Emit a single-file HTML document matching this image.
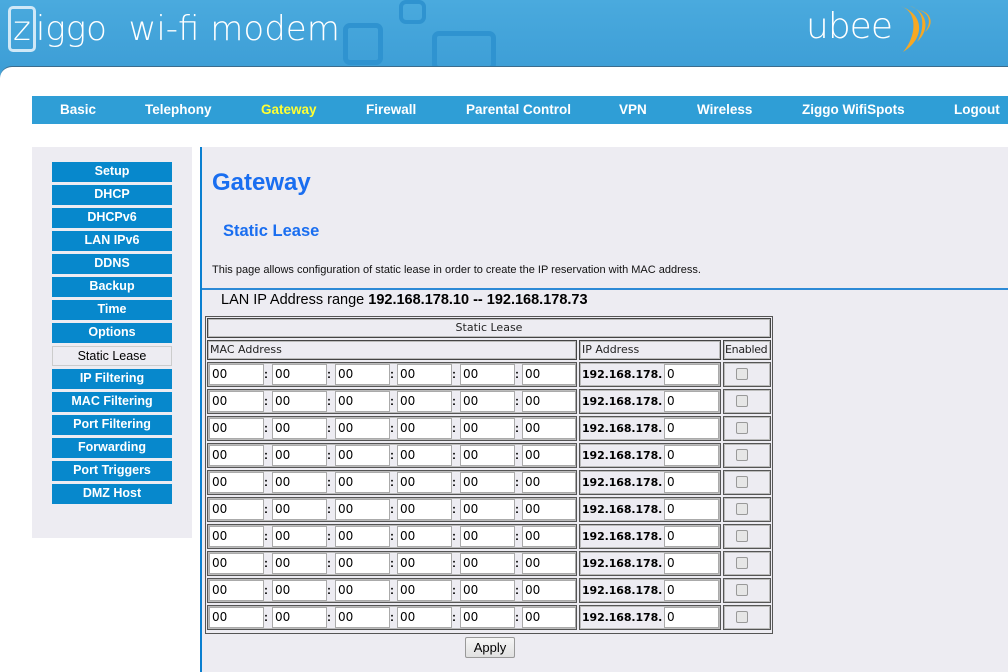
<!DOCTYPE html>
<html><head><meta charset="utf-8"><style>
*{box-sizing:border-box;margin:0;padding:0}
body{width:1008px;height:672px;overflow:hidden;position:relative;font-family:"Liberation Sans",Arial,sans-serif;background:#43a3d9}
.hdr{position:absolute;left:0;top:0;width:1008px;height:70px;background:linear-gradient(#4aaade,#3d9ed6)}
.logo{position:absolute;left:8px;top:9px;color:#fff;font-size:34px;font-family:"DejaVu Sans",sans-serif;font-weight:200}
.sq{position:absolute;border:5px solid #2f93d0;border-radius:7px}
.panel{position:absolute;left:0;top:66px;width:1008px;height:606px;background:#fff;border-top-left-radius:12px;border-top:1px solid #3b6c8d}
.nav{position:absolute;left:32px;top:96px;width:976px;height:28px;background:#2f9ed6}
.nav span{position:absolute;top:6px;color:#fff;font-weight:bold;font-size:13.5px}
.side{position:absolute;left:32px;top:147px;width:160px;height:391px;background:#edecf2}
.btn{position:absolute;left:52px;width:120px;height:20px;background:#0788cc;color:#fff;font-weight:bold;font-size:12.5px;text-align:center;line-height:18px}
.btn.sel{background:#edecf2;color:#000;font-weight:normal;border:1px solid #ccc}
.content{position:absolute;left:200px;top:147px;width:808px;height:525px;background:#edecf2;border-left:2px solid #0a7fd0}
.hl{position:absolute;left:202px;top:288px;width:806px;height:2px;background:#2d8ad6}
.cell{position:absolute;border:1px solid #444;box-shadow:inset 0 0 0 1px #bbb}
.tx{font-family:"DejaVu Sans",sans-serif;font-size:11px;color:#222}
.row{position:absolute;left:207px;height:25px;width:566px}
.row .m{position:absolute;left:0;top:0;width:370px;height:25px;border:1px solid #555;box-shadow:inset 0 0 0 1px #bbb}
.row .i{position:absolute;left:372px;top:0;width:142px;height:25px;border:1px solid #555;box-shadow:inset 0 0 0 1px #bbb}
.row .e{position:absolute;left:516px;top:0;width:48px;height:25px;border:1px solid #555;box-shadow:inset 0 0 0 1px #bbb}
.in{position:absolute;top:2px;height:21px;background:#fff;border:1px solid #aaa;font-family:"DejaVu Sans",sans-serif;font-size:12px;padding-left:2px;line-height:19px;color:#000}
.c{position:absolute;top:5px;font-weight:bold;font-size:12px}
.ip{position:absolute;left:375px;top:6px;font-family:"DejaVu Sans",sans-serif;font-weight:bold;font-size:11px;letter-spacing:-0.1px}
.cb{position:absolute;left:529px;top:6px;width:12px;height:12px;border:1px solid #999;border-radius:2px;background:#e6e6e6}
</style></head><body>
<div class="hdr">
 <div class="logo"><span style="border:3px solid #cfe8f7;border-radius:5px;padding:0 2px">z</span>iggo&nbsp;&nbsp;wi-fi modem</div>
 <div class="sq" style="left:343px;top:23px;width:40px;height:42px"></div>
 <div class="sq" style="left:399px;top:0;width:27px;height:24px;border-width:4px"></div>
 <div class="sq" style="left:432px;top:31px;width:64px;height:40px"></div>
 <div style="position:absolute;left:806px;top:6px;color:#fff;font-size:36px;font-family:'DejaVu Sans',sans-serif;font-weight:200;letter-spacing:-1px">ubee</div>
 <svg style="position:absolute;left:895px;top:4px" width="40" height="48" viewBox="0 0 40 48"><path d="M5 2 C25 8 20 35 8 48 C30 35 30 10 5 2Z M15 2 C30 6 30 25 22 38 C36 25 32 8 15 2Z M24 6 C36 10 36 20 30 28 C40 20 36 8 24 6Z" fill="#f7a823"/></svg>
</div>
<div class="panel"></div>
<div class="nav">
<span style="left:28px">Basic</span><span style="left:113px">Telephony</span><span style="left:229px;color:#ffff33">Gateway</span><span style="left:334px">Firewall</span><span style="left:434px">Parental Control</span><span style="left:587px">VPN</span><span style="left:665px">Wireless</span><span style="left:770px">Ziggo WifiSpots</span><span style="left:922px">Logout</span>
</div>
<div class="side"></div>
<div class="btn" style="top:162px">Setup</div>
<div class="btn" style="top:185px">DHCP</div>
<div class="btn" style="top:208px">DHCPv6</div>
<div class="btn" style="top:231px">LAN IPv6</div>
<div class="btn" style="top:254px">DDNS</div>
<div class="btn" style="top:277px">Backup</div>
<div class="btn" style="top:300px">Time</div>
<div class="btn" style="top:323px">Options</div>
<div class="btn sel" style="top:346px">Static Lease</div>
<div class="btn" style="top:369px">IP Filtering</div>
<div class="btn" style="top:392px">MAC Filtering</div>
<div class="btn" style="top:415px">Port Filtering</div>
<div class="btn" style="top:438px">Forwarding</div>
<div class="btn" style="top:461px">Port Triggers</div>
<div class="btn" style="top:484px">DMZ Host</div>
<div class="content"></div>
<div style="position:absolute;left:212px;top:169px;font-size:24px;font-weight:bold;color:#1a6ef0">Gateway</div>
<div style="position:absolute;left:223px;top:222px;font-size:16.5px;font-weight:bold;color:#1a6ef0">Static Lease</div>
<div style="position:absolute;left:212px;top:264px;font-size:11px;color:#111">This page allows configuration of static lease in order to create the IP reservation with MAC address.</div>
<div class="hl"></div>
<div style="position:absolute;left:221px;top:292px;font-size:14.5px;color:#000">LAN IP Address range <b>192.168.178.10 -- 192.168.178.73</b></div>
<div style="position:absolute;left:205px;top:316px;width:568px;height:318px;border:1px solid #555"></div>
<div class="cell tx" style="left:207px;top:318px;width:564px;height:20px;text-align:center;line-height:18px">Static Lease</div>
<div class="cell tx" style="left:207px;top:340px;width:370px;height:20px;line-height:18px;padding-left:2px">MAC Address</div>
<div class="cell tx" style="left:579px;top:340px;width:142px;height:20px;line-height:18px;padding-left:2px">IP Address</div>
<div class="cell tx" style="left:723px;top:340px;width:48px;height:20px;line-height:18px;padding-left:1px;letter-spacing:-0.3px">Enabled</div>

<div class="row" style="top:362px"><div class="m"></div><div class="in" style="left:2px;width:55px">00</div><span class="c" style="left:57px">:</span><div class="in" style="left:65px;width:55px">00</div><span class="c" style="left:120px">:</span><div class="in" style="left:128px;width:55px">00</div><span class="c" style="left:183px">:</span><div class="in" style="left:190px;width:55px">00</div><span class="c" style="left:245px">:</span><div class="in" style="left:253px;width:55px">00</div><span class="c" style="left:308px">:</span><div class="in" style="left:315px;width:54px">00</div><div class="i"></div><span class="ip">192.168.178.</span><div class="in" style="left:457px;width:55px">0</div><div class="e"></div><div class="cb"></div></div>
<div class="row" style="top:389px"><div class="m"></div><div class="in" style="left:2px;width:55px">00</div><span class="c" style="left:57px">:</span><div class="in" style="left:65px;width:55px">00</div><span class="c" style="left:120px">:</span><div class="in" style="left:128px;width:55px">00</div><span class="c" style="left:183px">:</span><div class="in" style="left:190px;width:55px">00</div><span class="c" style="left:245px">:</span><div class="in" style="left:253px;width:55px">00</div><span class="c" style="left:308px">:</span><div class="in" style="left:315px;width:54px">00</div><div class="i"></div><span class="ip">192.168.178.</span><div class="in" style="left:457px;width:55px">0</div><div class="e"></div><div class="cb"></div></div>
<div class="row" style="top:416px"><div class="m"></div><div class="in" style="left:2px;width:55px">00</div><span class="c" style="left:57px">:</span><div class="in" style="left:65px;width:55px">00</div><span class="c" style="left:120px">:</span><div class="in" style="left:128px;width:55px">00</div><span class="c" style="left:183px">:</span><div class="in" style="left:190px;width:55px">00</div><span class="c" style="left:245px">:</span><div class="in" style="left:253px;width:55px">00</div><span class="c" style="left:308px">:</span><div class="in" style="left:315px;width:54px">00</div><div class="i"></div><span class="ip">192.168.178.</span><div class="in" style="left:457px;width:55px">0</div><div class="e"></div><div class="cb"></div></div>
<div class="row" style="top:443px"><div class="m"></div><div class="in" style="left:2px;width:55px">00</div><span class="c" style="left:57px">:</span><div class="in" style="left:65px;width:55px">00</div><span class="c" style="left:120px">:</span><div class="in" style="left:128px;width:55px">00</div><span class="c" style="left:183px">:</span><div class="in" style="left:190px;width:55px">00</div><span class="c" style="left:245px">:</span><div class="in" style="left:253px;width:55px">00</div><span class="c" style="left:308px">:</span><div class="in" style="left:315px;width:54px">00</div><div class="i"></div><span class="ip">192.168.178.</span><div class="in" style="left:457px;width:55px">0</div><div class="e"></div><div class="cb"></div></div>
<div class="row" style="top:470px"><div class="m"></div><div class="in" style="left:2px;width:55px">00</div><span class="c" style="left:57px">:</span><div class="in" style="left:65px;width:55px">00</div><span class="c" style="left:120px">:</span><div class="in" style="left:128px;width:55px">00</div><span class="c" style="left:183px">:</span><div class="in" style="left:190px;width:55px">00</div><span class="c" style="left:245px">:</span><div class="in" style="left:253px;width:55px">00</div><span class="c" style="left:308px">:</span><div class="in" style="left:315px;width:54px">00</div><div class="i"></div><span class="ip">192.168.178.</span><div class="in" style="left:457px;width:55px">0</div><div class="e"></div><div class="cb"></div></div>
<div class="row" style="top:497px"><div class="m"></div><div class="in" style="left:2px;width:55px">00</div><span class="c" style="left:57px">:</span><div class="in" style="left:65px;width:55px">00</div><span class="c" style="left:120px">:</span><div class="in" style="left:128px;width:55px">00</div><span class="c" style="left:183px">:</span><div class="in" style="left:190px;width:55px">00</div><span class="c" style="left:245px">:</span><div class="in" style="left:253px;width:55px">00</div><span class="c" style="left:308px">:</span><div class="in" style="left:315px;width:54px">00</div><div class="i"></div><span class="ip">192.168.178.</span><div class="in" style="left:457px;width:55px">0</div><div class="e"></div><div class="cb"></div></div>
<div class="row" style="top:524px"><div class="m"></div><div class="in" style="left:2px;width:55px">00</div><span class="c" style="left:57px">:</span><div class="in" style="left:65px;width:55px">00</div><span class="c" style="left:120px">:</span><div class="in" style="left:128px;width:55px">00</div><span class="c" style="left:183px">:</span><div class="in" style="left:190px;width:55px">00</div><span class="c" style="left:245px">:</span><div class="in" style="left:253px;width:55px">00</div><span class="c" style="left:308px">:</span><div class="in" style="left:315px;width:54px">00</div><div class="i"></div><span class="ip">192.168.178.</span><div class="in" style="left:457px;width:55px">0</div><div class="e"></div><div class="cb"></div></div>
<div class="row" style="top:551px"><div class="m"></div><div class="in" style="left:2px;width:55px">00</div><span class="c" style="left:57px">:</span><div class="in" style="left:65px;width:55px">00</div><span class="c" style="left:120px">:</span><div class="in" style="left:128px;width:55px">00</div><span class="c" style="left:183px">:</span><div class="in" style="left:190px;width:55px">00</div><span class="c" style="left:245px">:</span><div class="in" style="left:253px;width:55px">00</div><span class="c" style="left:308px">:</span><div class="in" style="left:315px;width:54px">00</div><div class="i"></div><span class="ip">192.168.178.</span><div class="in" style="left:457px;width:55px">0</div><div class="e"></div><div class="cb"></div></div>
<div class="row" style="top:578px"><div class="m"></div><div class="in" style="left:2px;width:55px">00</div><span class="c" style="left:57px">:</span><div class="in" style="left:65px;width:55px">00</div><span class="c" style="left:120px">:</span><div class="in" style="left:128px;width:55px">00</div><span class="c" style="left:183px">:</span><div class="in" style="left:190px;width:55px">00</div><span class="c" style="left:245px">:</span><div class="in" style="left:253px;width:55px">00</div><span class="c" style="left:308px">:</span><div class="in" style="left:315px;width:54px">00</div><div class="i"></div><span class="ip">192.168.178.</span><div class="in" style="left:457px;width:55px">0</div><div class="e"></div><div class="cb"></div></div>
<div class="row" style="top:605px"><div class="m"></div><div class="in" style="left:2px;width:55px">00</div><span class="c" style="left:57px">:</span><div class="in" style="left:65px;width:55px">00</div><span class="c" style="left:120px">:</span><div class="in" style="left:128px;width:55px">00</div><span class="c" style="left:183px">:</span><div class="in" style="left:190px;width:55px">00</div><span class="c" style="left:245px">:</span><div class="in" style="left:253px;width:55px">00</div><span class="c" style="left:308px">:</span><div class="in" style="left:315px;width:54px">00</div><div class="i"></div><span class="ip">192.168.178.</span><div class="in" style="left:457px;width:55px">0</div><div class="e"></div><div class="cb"></div></div>

<div style="position:absolute;left:465px;top:637px;width:50px;height:21px;border:1px solid #999;border-radius:2px;background:linear-gradient(#f6f6f6,#e0e0e0);font-size:13px;text-align:center;line-height:19px">Apply</div>
</body></html>
